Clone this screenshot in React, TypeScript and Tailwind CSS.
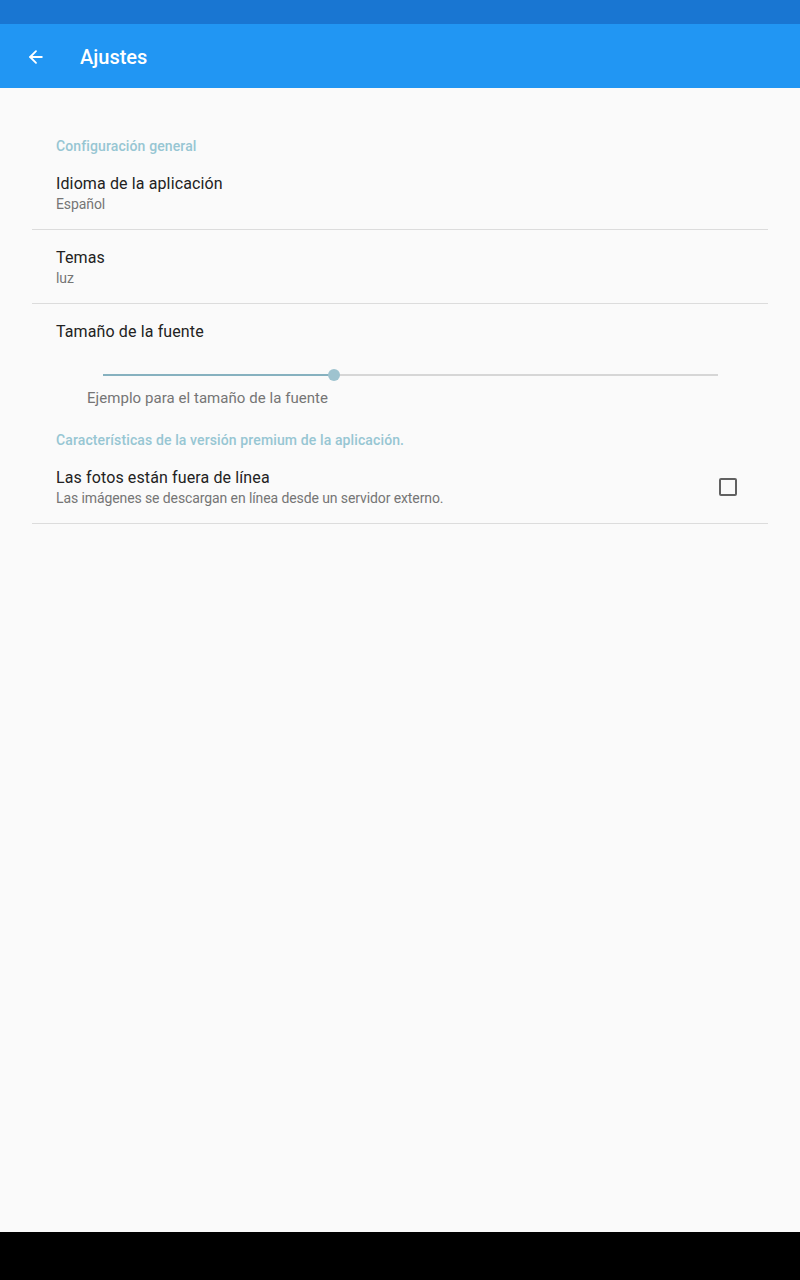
import { ArrowLeft } from "lucide-react";

function Pref({ title, summary }: { title: string; summary: string }) {
  return (
    <div className="flex flex-col px-6 pt-4 pb-4 border-b border-[#dcdcdc]">
      <span className="text-[16px] leading-[24px] tracking-[0.12px] text-[#222222]">{title}</span>
      <span className="-mt-[1px] text-[14px] leading-[18px] tracking-[-0.1px] text-[#757575]">{summary}</span>
    </div>
  );
}

function Category({ children }: { children: string }) {
  return (
    <div className="px-6 h-[18px] flex items-center text-[14px] font-medium tracking-[0.12px] text-[#97c6d3]">
      {children}
    </div>
  );
}

export default function App() {
  const value = 0.375;
  return (
    <div
      className="w-[800px] h-[1280px] flex flex-col bg-[#fafafa]"
      style={{ fontFamily: "Roboto, 'Noto Sans', sans-serif" }}
    >
      <div className="h-[24px] bg-[#1976d2]" />
      <div className="h-[64px] bg-[#2196f3] flex items-center pt-[2px] text-white">
        <ArrowLeft size={20} strokeWidth={2.2} className="ml-[26px]" />
        <span className="ml-[34px] text-[20px] font-medium">Ajustes</span>
      </div>

      <div className="flex-1 flex flex-col px-8 pt-[49px]">
        <div className="mb-[1px]">
          <Category>Configuración general</Category>
        </div>
        <Pref title="Idioma de la aplicación" summary="Español" />
        <Pref title="Temas" summary="luz" />

        <div className="flex flex-col px-6 pt-4">
          <span className="text-[16px] leading-[24px] tracking-[0.12px] text-[#222222]">Tamaño de la fuente</span>
          <div className="relative mt-[25px] ml-[47px] mr-[26px] h-[12px] flex items-center">
            <div className="h-[2px] w-full bg-[#d6d6d6]" />
            <div
              className="absolute left-0 h-[2px] bg-[#86b1bf]"
              style={{ width: `${value * 100}%` }}
            />
            <div
              className="absolute w-[12px] h-[12px] rounded-full bg-[#9ec3cf] -translate-x-1/2"
              style={{ left: `${value * 100}%` }}
            />
          </div>
          <span className="ml-[31px] mt-[7px] text-[15px] leading-[20px] tracking-[0.05px] text-[#757575]">
            Ejemplo para el tamaño de la fuente
          </span>
        </div>

        <div className="mt-[23px]">
          <Category>Características de la versión premium de la aplicación.</Category>
        </div>
        <div className="flex items-center px-6 pt-[17px] pb-4 border-b border-[#dcdcdc]">
          <div className="flex-1 flex flex-col">
            <span className="text-[16px] leading-[24px] tracking-[0.12px] text-[#222222]">Las fotos están fuera de línea</span>
            <span className="-mt-[1px] text-[14px] leading-[18px] tracking-[-0.1px] text-[#757575]">
              Las imágenes se descargan en línea desde un servidor externo.
            </span>
          </div>
          <div className="w-[18px] h-[18px] border-2 border-[#616161] rounded-[2px] mr-[7px]" />
        </div>
      </div>

      <div className="h-[48px] bg-black" />
    </div>
  );
}
